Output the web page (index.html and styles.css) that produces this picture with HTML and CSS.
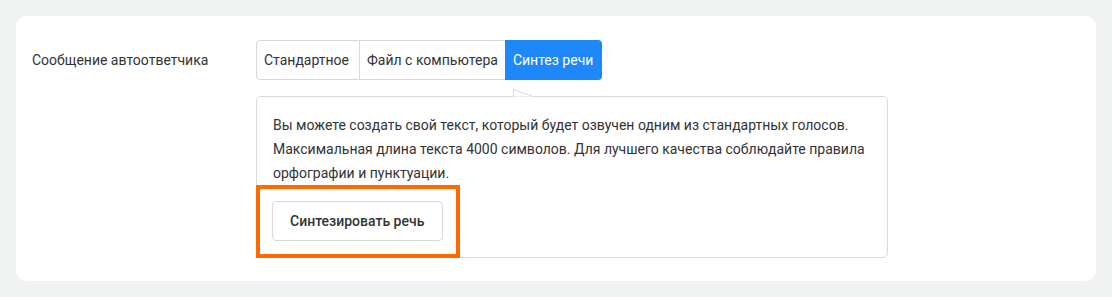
FILE: index.html
```html
<!DOCTYPE html>
<html lang="ru">
<head>
  <meta charset="UTF-8" />
  <meta name="viewport" content="width=device-width, initial-scale=1.0"/>
  <title>Сообщение автоответчика</title>
  <link rel="stylesheet" href="styles.css">
</head>
<body>
  <div class="card">
    <div class="row">
      <div class="row-label">Сообщение автоответчика</div>
      <div class="row-body">
        <div class="tabs">
          <div class="tab">Стандартное</div>
          <div class="tab">Файл с компьютера</div>
          <div class="tab active">Синтез речи</div>
        </div>
        <div class="pop">
          <svg class="pop-arrow" width="20" height="8" viewBox="0 0 20 8">
            <path d="M0.5 7.5 L0.5 0.8 C5 1.5 10 5 19 6.5 L19 7.5 Z" fill="#fff"/>
            <path d="M0.5 7 L0.5 0.8 C5 1.5 10 5 19 6.5" fill="none" stroke="#dadada" stroke-width="1"/>
          </svg>
          <p class="pop-text">Вы можете создать свой текст, который будет озвучен одним из стандартных голосов. Максимальная длина текста 4000 символов. Для лучшего качества соблюдайте правила орфографии и пунктуации.</p>
          <button class="btn">Синтезировать речь</button>
          <div class="highlight"></div>
        </div>
      </div>
    </div>
  </div>
</body>
</html>
```

FILE: styles.css
```css
body { margin: 0; background: #f1f2f2; font-family: Roboto, "Liberation Sans", sans-serif; font-size: 14px; color: #333; }
.card { margin: 16px 16px 17px; background: #fff; border-radius: 10px; padding: 24px 16px 23px; }
.row { display: flex; }
.row-label { width: 224px; line-height: 40px; color: #333; }
.row-body { display: flex; flex-direction: column; align-items: flex-start; }
.tabs { display: flex; border: 1px solid #d9d9d9; border-radius: 4px; height: 38px; }
.tab { padding: 0 7px; line-height: 38px; color: #333; border-left: 1px solid #d9d9d9; }
.tab:first-child { border-left: none; padding-right: 10px; }
.tab.active { background: #1e88fb; color: #fff; border-left-color: #1e88fb; margin: -1px -1px -1px 0; line-height: 40px; border-radius: 0 4px 4px 0; padding-right: 9px; }
.pop { position: relative; margin-top: 16px; width: 598px; padding: 16px; border: 1px solid #dadada; border-radius: 5px; }
.pop-arrow { position: absolute; top: -8px; left: 256px; }
.pop-text { margin: 0; line-height: 24px; color: #333; }
.btn { margin-top: 16px; height: 40px; padding: 0 18px 0 17px; background: #fff; border: 1px solid #d9d9d9; border-radius: 4px; font-family: inherit; font-size: 14px; font-weight: 500; color: #333; margin-left: -1px; }
.highlight { position: absolute; left: -1px; top: 88px; width: 196px; height: 65px; border: 4px solid #ff6b00; }
```
